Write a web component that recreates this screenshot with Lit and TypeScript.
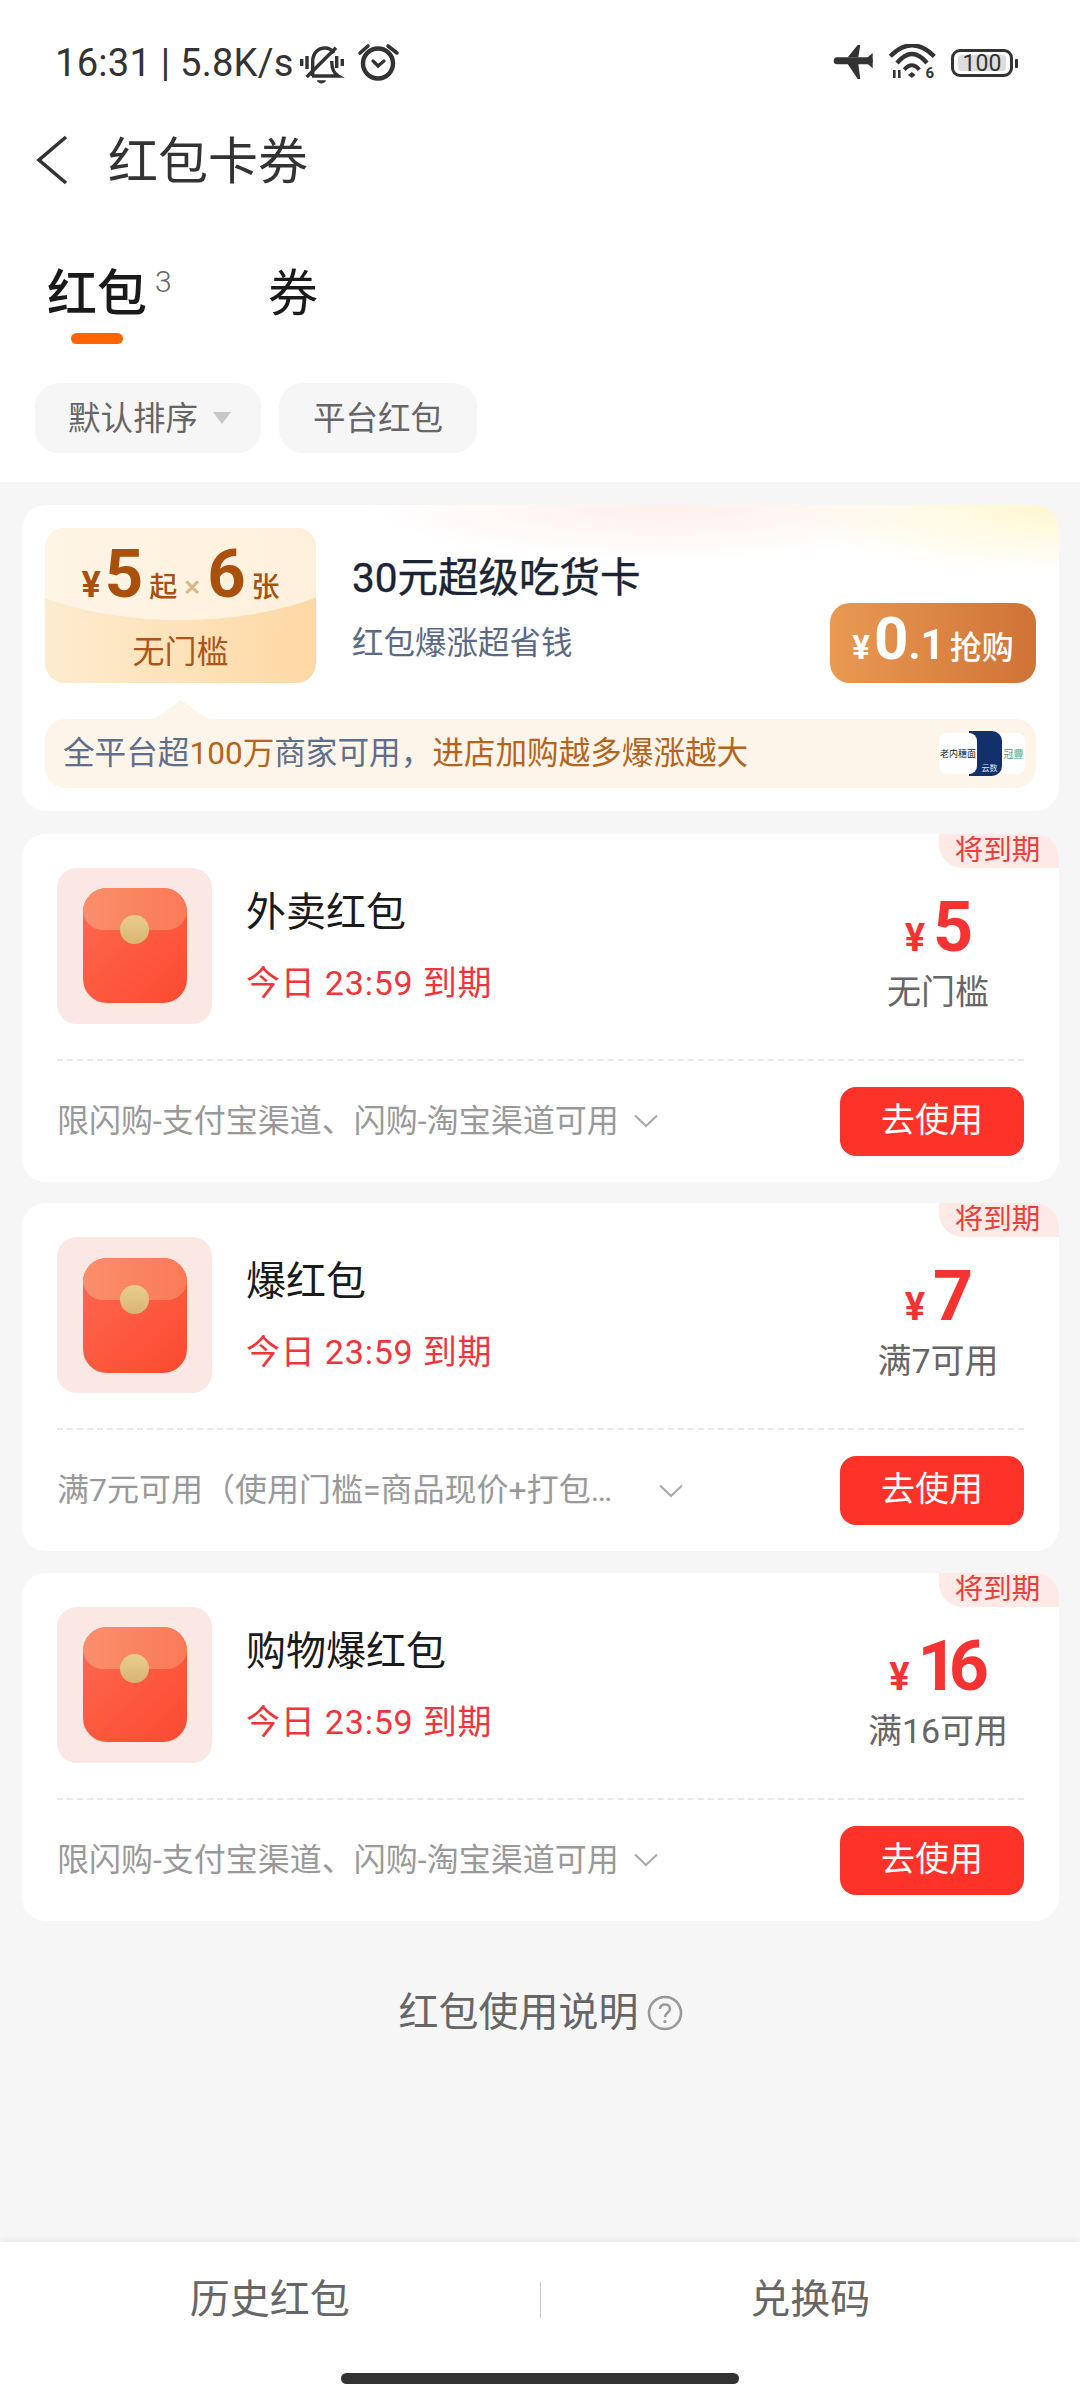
import { LitElement, html, css } from "lit";
import { customElement } from "lit/decorators.js";

interface Coupon {
  name: string;
  amount: string;
  rule: string;
  desc: string;
  wide?: boolean;
}

const COUPONS: Coupon[] = [
  { name: "外卖红包", amount: "5", rule: "无门槛", desc: "限闪购-支付宝渠道、闪购-淘宝渠道可用" },
  { name: "爆红包", amount: "7", rule: "满7可用", desc: "满7元可用（使用门槛=商品现价+打包…", wide: true },
  { name: "购物爆红包", amount: "16", rule: "满16可用", desc: "限闪购-支付宝渠道、闪购-淘宝渠道可用" },
];

@customElement("app-root")
export class AppRoot extends LitElement {
  static styles = css`
    :host {
      display: block;
      width: 1080px;
      height: 2400px;
      font-family: Roboto, "Noto Sans CJK SC", sans-serif;
      color: #1a1a1a;
    }
    .page {
      height: 100%;
      display: flex;
      flex-direction: column;
      background: #f6f6f6;
    }
    .top {
      background: #fff;
      padding-bottom: 29px;
    }

    /* status bar */
    .status {
      height: 66px;
      padding: 30px 62px 0 55px;
      display: flex;
      align-items: center;
      color: #333;
    }
    .status-text {
      font-size: 38.2px;
      letter-spacing: 0.2px;
      white-space: nowrap;
      width: 244px;
    }
    .bell {
      width: 48px;
      height: 40px;
      margin-top: 4px;
    }
    .alarm {
      width: 44px;
      height: 44px;
      margin-left: 9px;
    }
    .status-right {
      margin-left: auto;
      display: flex;
      align-items: center;
    }
    .plane {
      width: 46px;
      height: 40px;
    }
    .wifi {
      width: 52px;
      height: 38px;
      margin-left: 10px;
    }
    .battery {
      box-sizing: border-box;
      width: 62px;
      height: 28px;
      margin-left: 12px;
      padding: 3px 4px;
      border: 3px solid #333;
      border-radius: 9px;
      display: flex;
    }
    .battery span {
      flex: 1;
      background: #ddd;
      border-radius: 3px;
      font-size: 23px;
      line-height: 17px;
      text-align: center;
    }
    .battery-tip {
      width: 3px;
      height: 9px;
      margin-left: 2px;
      border-radius: 1px;
      background: #333;
    }

    /* nav */
    .nav {
      height: 128px;
      padding-left: 35px;
      display: flex;
      align-items: center;
    }
    .back {
      width: 34px;
      height: 52px;
    }
    .nav-title {
      margin-left: 39px;
      padding-bottom: 6px;
      font-size: 50px;
      color: #333;
    }

    /* tabs */
    .tabs {
      display: flex;
      height: 120px;
      padding: 35px 0 0 47px;
      box-sizing: border-box;
    }
    .tab {
      display: flex;
      flex-direction: column;
      align-items: center;
      position: relative;
      font-size: 50px;
      line-height: 70px;
    }
    .tab.on {
      font-weight: 500;
    }
    .tab + .tab {
      margin-left: 121px;
    }
    .tab sup {
      position: absolute;
      left: 108px;
      top: 3px;
      font-size: 30px;
      line-height: 40px;
      font-weight: 300;
      color: #666;
    }
    .bar {
      width: 52px;
      height: 11px;
      margin-top: 4px;
      border-radius: 6px;
      background: #ff6600;
    }

    /* filters */
    .chips {
      display: flex;
      gap: 18px;
      margin: 39px 0 0 35px;
    }
    .chip {
      height: 70px;
      padding: 0 34px;
      display: flex;
      align-items: center;
      border-radius: 24px;
      background: #f6f6f6;
      font-size: 32.5px;
      color: #666;
    }
    .chip span {
      padding-bottom: 6px;
    }
    .chip.sort {
      padding: 0 30px 0 33px;
    }
    .tri {
      width: 18px;
      height: 12px;
      margin-left: 15px;
    }

    /* list */
    .list {
      flex: 1;
      padding: 23px 21px 0 22px;
      display: flex;
      flex-direction: column;
      gap: 21.5px;
    }
    .card {
      background: #fff;
      border-radius: 24px;
    }

    /* promo */
    .promo {
      box-sizing: border-box;
      height: 306px;
      margin-bottom: 1.4px;
      padding: 23px;
      background: radial-gradient(ellipse 280px 70px at 100% 0, #fff6cf, rgba(255, 246, 207, 0)),
        radial-gradient(ellipse 300px 55px at 62% 0, #ffefec, rgba(255, 239, 236, 0)), #fff;
    }
    .promo-top {
      display: flex;
      height: 155px;
    }
    .badge {
      width: 271px;
      border-radius: 20px;
      position: relative;
      overflow: hidden;
      background: linear-gradient(90deg, #fdeccf, #fed8a4);
      color: #a8500c;
      text-align: center;
    }
    .badge::before {
      content: "";
      position: absolute;
      left: -65px;
      top: -76px;
      width: 400px;
      height: 168px;
      border-radius: 50%;
      background: linear-gradient(90deg, #fff6e8, #ffefd9);
    }
    .badge-line {
      position: relative;
      height: 92px;
      display: flex;
      align-items: baseline;
      justify-content: center;
      font-size: 28px;
      line-height: 92px;
      font-weight: 500;
    }
    .badge-line .yen {
      font-size: 36px;
      font-weight: 700;
      margin-right: 4px;
    }
    .badge-line b {
      font-size: 67px;
      font-weight: 700;
      margin-right: 6px;
    }
    .badge-line i {
      font-style: normal;
      font-weight: 500;
      font-size: 30px;
      color: #d8b78b;
      margin: 0 7px;
    }
    .badge-rule {
      position: relative;
      margin-top: 10px;
      font-size: 32px;
      line-height: 44px;
      color: #a8571a;
    }
    .promo-info {
      margin-left: 36px;
      padding-top: 22px;
      flex: 1;
    }
    .promo-title {
      font-size: 40.5px;
      line-height: 56px;
      color: #1c2433;
      -webkit-text-stroke: 0.4px #1c2433;
      white-space: nowrap;
    }
    .promo-sub {
      margin-top: 16px;
      font-size: 31.5px;
      line-height: 44px;
      color: #5a6a85;
    }
    .buy {
      align-self: flex-end;
      width: 206px;
      height: 80px;
      border-radius: 20px;
      background: linear-gradient(90deg, #e99952, #cf7336);
      color: #fff;
      display: flex;
      align-items: baseline;
      justify-content: center;
      font-size: 32px;
      line-height: 72px;
      font-weight: 500;
    }
    .buy .yen {
      font-size: 33px;
      font-weight: 700;
      margin-right: 4px;
    }
    .buy .big {
      font-size: 60px;
      font-weight: 700;
    }
    .buy .mid {
      font-size: 42px;
      font-weight: 700;
      margin-right: 5px;
    }
    .tip {
      position: relative;
      height: 69px;
      margin-top: 36px;
      padding: 0 11px 0 18px;
      display: flex;
      align-items: center;
      border-radius: 20px;
      background: #fef5ea;
      font-size: 31.6px;
      color: #5f6f8a;
      white-space: nowrap;
    }
    .notch {
      position: absolute;
      left: 100px;
      top: -19px;
      width: 72px;
      height: 20px;
    }
    .tip-text {
      padding-bottom: 8px;
    }
    .tip .hot {
      color: #b4651d;
    }
    .logos {
      margin-left: auto;
      display: flex;
      align-items: center;
    }
    .logo {
      box-sizing: border-box;
      height: 41px;
      display: flex;
      align-items: center;
      justify-content: center;
      white-space: nowrap;
    }
    .logo-a {
      position: relative;
      width: 38px;
      background: #fff;
      border-radius: 8px;
      font-size: 9px;
      color: #222;
    }
    .logo-b {
      width: 33px;
      height: 45px;
      margin-left: -8px;
      padding: 28px 0 0 8px;
      background: #12306a;
      border-radius: 0 10px 10px 0;
      font-size: 8px;
      color: #dfe6f2;
    }
    .logo-c {
      width: 23px;
      background: #fff;
      border-radius: 0 8px 8px 0;
      font-size: 10px;
      color: #4da889;
    }

    /* coupon */
    .coupon {
      box-sizing: border-box;
      height: 348px;
      padding: 34px 35px 26px;
      position: relative;
    }
    .tag {
      position: absolute;
      top: 0;
      right: 0;
      width: 120px;
      height: 34px;
      padding-right: 3px;
      box-sizing: border-box;
      background: #fde9e6;
      border-radius: 0 24px 0 24px;
      color: #e8403a;
      font-size: 28.5px;
      line-height: 33px;
      text-align: center;
    }
    .coupon-main {
      height: 156px;
      display: flex;
      padding-bottom: 35px;
      border-bottom: 2px dashed #e9e9e9;
    }
    .pack {
      width: 155px;
      height: 156px;
      border-radius: 20px;
      background: #fbe8e5;
      display: flex;
      align-items: center;
      justify-content: center;
    }
    .envelope {
      width: 104px;
      height: 115px;
      position: relative;
      overflow: hidden;
      border-radius: 24px;
      background: linear-gradient(135deg, #fe6a50, #fb4a30);
    }
    .envelope::before {
      content: "";
      position: absolute;
      inset: 0 0 auto;
      height: 42px;
      border-radius: 0 0 20px 20px;
      background: linear-gradient(90deg, #f98f6c, #fb7a56);
    }
    .envelope::after {
      content: "";
      position: absolute;
      left: 37px;
      top: 27px;
      width: 29px;
      height: 29px;
      border-radius: 50%;
      background: linear-gradient(180deg, #e9cd8e, #d9b570);
    }
    .coupon-info {
      flex: 1;
      margin-left: 34px;
      padding-top: 4px;
      display: flex;
      flex-direction: column;
      justify-content: center;
      gap: 20px;
    }
    .coupon-name {
      font-size: 40px;
      line-height: 50px;
    }
    .coupon-date {
      font-size: 34px;
      line-height: 50px;
      letter-spacing: 0.8px;
      color: #f0353a;
    }
    .value {
      width: 172px;
      padding-top: 29px;
      text-align: center;
    }
    .amount {
      display: flex;
      align-items: baseline;
      justify-content: center;
      height: 60px;
      padding-right: 7px;
      line-height: 60px;
      font-size: 70px;
      font-weight: 700;
      color: #f53333;
      letter-spacing: -9px;
    }
    .amount span {
      font-size: 38px;
      margin-right: 8px;
      letter-spacing: 0;
    }
    .rule {
      margin-top: 10px;
      font-size: 34px;
      line-height: 50px;
      color: #666;
    }
    .coupon-foot {
      height: 69px;
      margin-top: 26px;
      display: flex;
      align-items: center;
    }
    .desc {
      padding-bottom: 7px;
      white-space: nowrap;
      font-size: 32px;
      color: #999;
    }
    .desc.wide {
      width: 587px;
    }
    .chev {
      width: 24px;
      height: 14px;
      margin-left: 15px;
    }
    .use {
      margin-left: auto;
      width: 184px;
      height: 69px;
      border-radius: 16px;
      background: #fd3229;
      color: #fff;
      font-size: 34px;
      line-height: 66px;
      text-align: center;
    }

    /* help */
    .help {
      margin-top: 46px;
      display: flex;
      justify-content: center;
      align-items: center;
      gap: 8px;
      font-size: 40px;
      line-height: 50px;
      color: #666;
    }
    .help svg {
      width: 36px;
      height: 36px;
    }

    /* bottom */
    .bottom {
      height: 158px;
      background: #fff;
      box-shadow: 0 -2px 6px rgba(0, 0, 0, 0.06);
    }
    .links {
      height: 116px;
      display: flex;
      align-items: center;
      font-size: 40px;
      color: #666;
    }
    .links span {
      flex: 1;
      padding-bottom: 8px;
      text-align: center;
    }
    .links i {
      width: 1px;
      height: 36px;
      background: #ccc;
    }
    .pill {
      width: 398px;
      height: 11px;
      margin: 15px auto 0;
      border-radius: 6px;
      background: #333;
    }
  `;

  renderStatus() {
    return html`
      <div class="status">
        <span class="status-text">16:31 | 5.8K/s</span>
        <svg class="bell" viewBox="0 0 48 40" fill="none" stroke="#333" stroke-width="3.4">
          <path d="M13.7 31V16C14 8 19 3 26 3C30 3 33 5 35 8" />
          <path d="M32.7 16C32.7 23 34 28 39.3 31H13" />
          <path d="M7.7 32L37 2.7" />
          <path d="M2.7 14V21M37.7 11V23M43.3 14V21M8 11V24" />
          <path d="M17.7 35.3H27C26 39.5 19 39.5 17.7 35.3Z" fill="#333" stroke="none" />
        </svg>
        <svg class="alarm" viewBox="0 0 44 44" fill="none" stroke="#333" stroke-linecap="round">
          <circle cx="22" cy="22.5" r="15" stroke-width="4.4" />
          <path d="M4 12L12 5M32 5L41 12" stroke-width="3.6" />
          <path d="M17 20L22 25L28 20" stroke-width="3.2" />
        </svg>
        <div class="status-right">
          <svg class="plane" viewBox="0 0 46 40" fill="#333">
            <rect x="2.7" y="14.2" width="39" height="7" rx="3.5" />
            <path d="M16.7 14.3L26.7 2H29.3L27.3 14.3ZM16.7 21L26.7 36H29.3L27.3 21ZM36.7 14.3L41.7 10V25.3L36.7 21Z" />
          </svg>
          <svg class="wifi" viewBox="0 0 52 38" fill="none" stroke="#333">
            <path d="M3.3 12.3Q24.7 -9.7 47.3 12.3" stroke-width="4.4" />
            <path d="M10 19Q25 1 40 19" stroke-width="4.4" />
            <path d="M17.3 25.7Q24.8 17 32.3 25.7" stroke-width="4" />
            <path d="M24.8 28L28.5 31L24.8 34L21 31Z" fill="#333" stroke="none" />
            <path d="M7.3 26V34M12.3 26V34" stroke-width="2.6" />
            <text x="38.5" y="34" font-size="15" font-weight="700" fill="#333" stroke="none">6</text>
          </svg>
          <div class="battery"><span>100</span></div>
          <div class="battery-tip"></div>
        </div>
      </div>
    `;
  }

  renderPromo() {
    return html`
      <div class="card promo">
        <div class="promo-top">
          <div class="badge">
            <div class="badge-line">
              <span class="yen">¥</span><b>5</b>起<i>×</i><b>6</b>张
            </div>
            <div class="badge-rule">无门槛</div>
          </div>
          <div class="promo-info">
            <div class="promo-title">30元超级吃货卡</div>
            <div class="promo-sub">红包爆涨超省钱</div>
          </div>
          <div class="buy">
            <span class="yen">¥</span><span class="big">0</span><span class="mid">.1</span>抢购
          </div>
        </div>
        <div class="tip">
          <svg class="notch" viewBox="0 0 72 20" fill="#fef5ea">
            <path d="M0 20C14 19 24 8 36 0C48 8 58 19 72 20Z" />
          </svg>
          <div class="tip-text">全平台超<span class="hot">100万</span>商家可用，<span class="hot">进店加购越多爆涨越大</span></div>
          <div class="logos">
            <div class="logo logo-a">老内穗面</div>
            <div class="logo logo-b">云数</div>
            <div class="logo logo-c">冠豐</div>
          </div>
        </div>
      </div>
    `;
  }

  renderCoupon(c: Coupon) {
    return html`
      <div class="card coupon">
        <div class="tag">将到期</div>
        <div class="coupon-main">
          <div class="pack"><div class="envelope"></div></div>
          <div class="coupon-info">
            <div class="coupon-name">${c.name}</div>
            <div class="coupon-date">今日 23:59 到期</div>
          </div>
          <div class="value">
            <div class="amount"><span>¥</span>${c.amount}</div>
            <div class="rule">${c.rule}</div>
          </div>
        </div>
        <div class="coupon-foot">
          <div class="desc ${c.wide ? "wide" : ""}">${c.desc}</div>
          <svg class="chev" viewBox="0 0 24 14" fill="none" stroke="#aaa" stroke-width="2.2">
            <path d="M1 1.5L12 12L23 1.5" />
          </svg>
          <div class="use">去使用</div>
        </div>
      </div>
    `;
  }

  render() {
    return html`
      <div class="page">
        <div class="top">
          ${this.renderStatus()}
          <div class="nav">
            <svg class="back" viewBox="0 0 34 52" fill="none" stroke="#333" stroke-width="3.6">
              <path d="M31 3L4 26L31 49" />
            </svg>
            <div class="nav-title">红包卡券</div>
          </div>
          <div class="tabs">
            <div class="tab on">
              红包<sup>3</sup>
              <div class="bar"></div>
            </div>
            <div class="tab">券</div>
          </div>
          <div class="chips">
            <div class="chip sort">
              <span>默认排序</span>
              <svg class="tri" viewBox="0 0 18 12" fill="#c8c8c8"><path d="M0 0H18L9 12Z" /></svg>
            </div>
            <div class="chip"><span>平台红包</span></div>
          </div>
        </div>
        <div class="list">
          ${this.renderPromo()}
          ${COUPONS.map((c) => this.renderCoupon(c))}
          <div class="help">
            红包使用说明
            <svg viewBox="0 0 36 36" fill="none" stroke="#999" stroke-width="2.6">
              <circle cx="18" cy="18" r="16" />
              <path d="M13 14C13 8 23 8 23 14C23 18 18 17.5 18 22" />
              <circle cx="18" cy="26.5" r="1.6" fill="#999" stroke="none" />
            </svg>
          </div>
        </div>
        <div class="bottom">
          <div class="links">
            <span>历史红包</span>
            <i></i>
            <span>兑换码</span>
          </div>
          <div class="pill"></div>
        </div>
      </div>
    `;
  }
}

declare global {
  interface HTMLElementTagNameMap {
    "app-root": AppRoot;
  }
}
